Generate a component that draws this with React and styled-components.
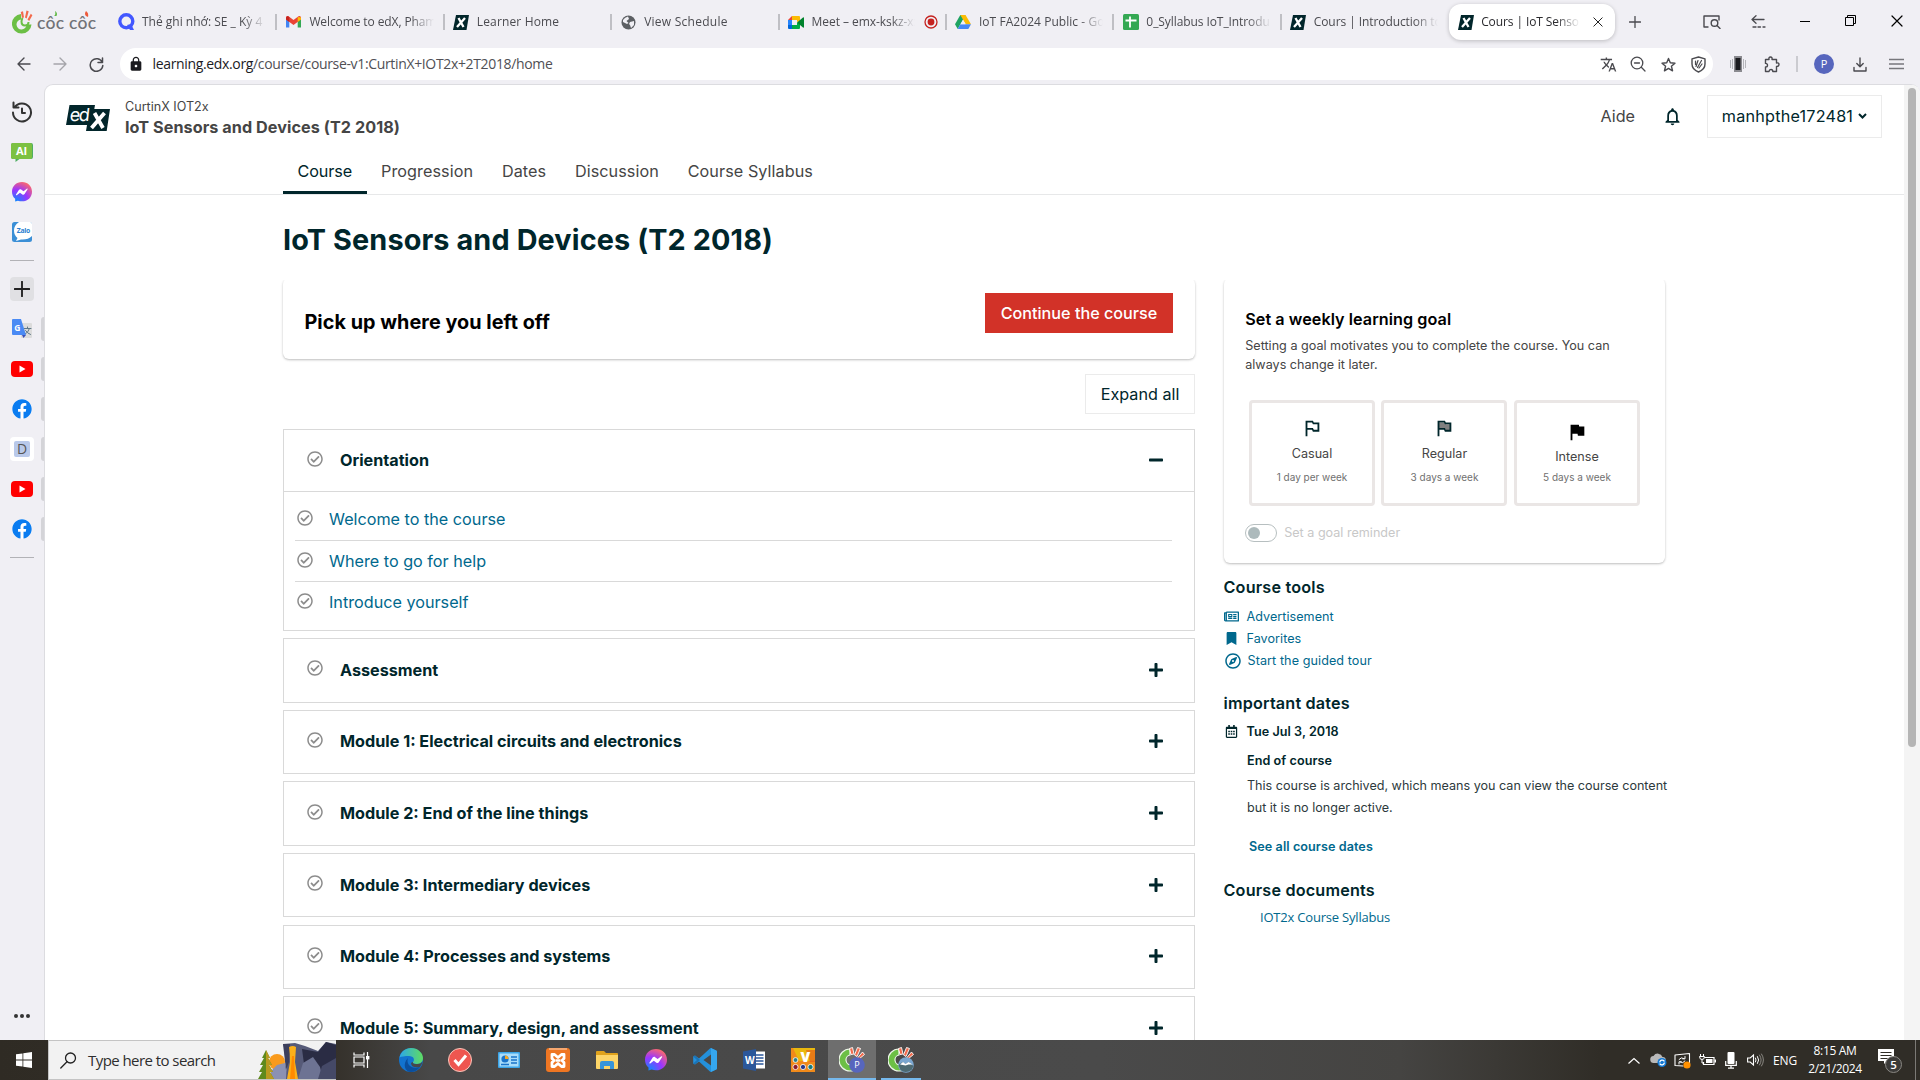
import React from "react";
import styled, { createGlobalStyle, css } from "styled-components";
import {
  FaRegCheckCircle,
  FaPlus,
  FaMinus,
  FaRegNewspaper,
  FaBookmark,
  FaRegCompass,
  FaRegCalendarAlt,
  FaFacebook,
} from "react-icons/fa";
import {
  MdOutlinedFlag,
  MdFlag,
  MdTranslate,
  MdLock,
  MdNotificationsNone,
} from "react-icons/md";

const inter = `Inter, "Liberation Sans", sans-serif`;
const segoe = `"Open Sans", "Noto Sans", sans-serif`;

const GlobalStyle = createGlobalStyle`
  *, *::before, *::after { box-sizing: border-box; }
  body { margin: 0; overflow: hidden; font-family: ${inter}; }
  svg { display: block; flex: none; }
`;

/* ---------- window ---------- */

const Screen = styled.div`
  display: flex;
  flex-direction: column;
  width: 1920px;
  height: 1080px;
  overflow: hidden;
  background: #f0eff4;
`;

const TabStrip = styled.div`
  display: flex;
  align-items: center;
  height: 44px;
  padding-left: 12px;
  font-family: ${segoe};
`;

const Brand = styled.div`
  display: flex;
  align-items: center;
  width: 98px;
  gap: 4px;
`;

const Tab = styled.div`
  display: flex;
  align-items: center;
  flex: none;
  width: 167.4px;
  height: 36px;
  padding: 0 9px 0 8px;
  gap: 7px;
  font-size: 12px;
  color: #4b4b50;
  ${(p) =>
    p.$divider &&
    css`
      background: linear-gradient(#bfbfc4, #bfbfc4) right center / 2px 16px no-repeat;
    `}
  ${(p) =>
    p.$active &&
    css`
      width: 166px;
      background: #fff;
      border-radius: 12px;
      color: #2a2a2e;
      box-shadow: 0 1px 4px rgba(0, 0, 0, 0.22);
    `}
`;

const TabTitle = styled.span`
  flex: 1;
  min-width: 0;
  overflow: hidden;
  white-space: nowrap;
  line-height: 20px;
  letter-spacing: ${(p) => p.$track}px;
  mask-image: linear-gradient(90deg, #000 calc(100% - 26px), transparent calc(100% - 2px));
`;

const TabIcon = styled.span`
  display: flex;
  justify-content: center;
  width: 17px;
  flex: none;
`;

const NewTab = styled.div`
  display: flex;
  justify-content: center;
  width: 39px;
`;

const WindowButtons = styled.div`
  display: flex;
  margin-left: auto;
`;

const WindowButton = styled.div`
  display: flex;
  justify-content: center;
  width: 46.2px;
`;

const Toolbar = styled.div`
  display: flex;
  align-items: center;
  height: 40px;
  padding: 0 6px;
`;

const ToolButton = styled.div`
  display: flex;
  justify-content: center;
  width: ${(p) => p.$w || 36}px;
`;

const AddressBar = styled.div`
  display: flex;
  align-items: center;
  width: 1593px;
  height: 32px;
  margin: 0 6px 0 6px;
  padding: 0 0 0 8px;
  border-radius: 16px;
  background: #fff;
  font: 14px/20px ${segoe};
  color: #505055;
`;

const Url = styled.span`
  margin-left: 8.5px;
  margin-right: auto;
  letter-spacing: -0.345px;
  white-space: nowrap;
  b {
    font-weight: 400;
    color: #1b1b1f;
  }
`;

const VLine = styled.span`
  width: 2px;
  height: 16px;
  margin: 0 16px 0 9px;
  background: #cbcbd0;
`;

const Avatar = styled.div`
  width: 20px;
  height: 20px;
  border-radius: 50%;
  background: #5766bd;
  color: #fff;
  font: 11px/20px ${segoe};
  text-align: center;
`;

const Body = styled.div`
  display: flex;
  flex: 1;
  min-height: 0;
`;

/* ---------- side rail ---------- */

const Rail = styled.div`
  display: flex;
  flex-direction: column;
  align-items: center;
  width: 44px;
  padding-top: 8px;
`;

const RailItem = styled.div`
  position: relative;
  display: flex;
  align-items: center;
  justify-content: center;
  width: 44px;
  height: 40px;
  ${(p) =>
    p.$open &&
    css`
      &::after {
        content: "";
        position: absolute;
        right: 0;
        top: 8px;
        width: 3px;
        height: 24px;
        border-radius: 3px 0 0 3px;
        background: #d4d4d8;
      }
    `}
`;

const RailLine = styled.div`
  width: 24px;
  height: 1px;
  margin: 8px 0;
  background: #b2b2b6;
`;

const RailTile = styled.div`
  display: flex;
  align-items: center;
  justify-content: center;
  width: 24px;
  height: 24px;
  border-radius: 4px;
  background: ${(p) => p.$bg};
`;

const LetterTile = styled.div`
  width: 16px;
  height: 16px;
  border-radius: 2px;
  background: #b9c9ea;
  color: #555;
  font: 14px/16px ${segoe};
  text-align: center;
`;

const RailMore = styled.div`
  display: flex;
  gap: 2px;
  margin-top: auto;
  margin-bottom: 22px;
  i {
    width: 4px;
    height: 4px;
    border-radius: 50%;
    background: #333;
  }
`;

const RailCircle = styled.div`
  border-radius: 50%;
  background: #fff;
`;

/* ---------- page ---------- */

const Viewport = styled.div`
  display: flex;
  flex: 1;
  min-width: 0;
  border: solid #dcdce0;
  border-width: 1px 0 0 1px;
  border-radius: 9px 9px 0 0;
  background: #fff;
  overflow: hidden;
`;

const Page = styled.div`
  flex: 1;
  height: 955px;
  overflow: hidden;
  color: #454545;
`;

const ScrollTrack = styled.div`
  width: 16px;
  padding: 3px 4px;
  background: #f4f4f4;
`;

const ScrollThumb = styled.div`
  width: 8px;
  height: 659px;
  border-radius: 4px;
  background: #b5b5b5;
`;

const Header = styled.header`
  height: 110px;
  border-bottom: 1px solid #e7e8e9;
`;

const HeaderTop = styled.div`
  display: flex;
  height: 67px;
  padding: 0 22px 0 21px;
`;

const Logo = styled.svg`
  margin: 20px 15px 0 0;
`;

const CourseName = styled.div`
  padding-top: 13px;
  font-size: 12.6px;
  line-height: 17px;
  white-space: nowrap;
  strong {
    display: block;
    margin-top: 2px;
    font-size: 16.2px;
    font-weight: 700;
    line-height: 20px;
    letter-spacing: 0.06px;
  }
`;

const HeaderRight = styled.div`
  display: flex;
  align-items: center;
  height: 43px;
  margin: 10px 0 0 auto;
  font-size: 16.2px;
`;

const Help = styled.span`
  margin: -2px 27px 0 0;
`;

const UserButton = styled.div`
  display: flex;
  align-items: center;
  justify-content: center;
  gap: 5px;
  width: 175px;
  height: 43px;
  padding-bottom: 1px;
  margin-left: 24px;
  border: 1px solid #ebebeb;
  color: #00262b;
  letter-spacing: 0.2px;
`;

const CourseTabs = styled.nav`
  display: flex;
  height: 42px;
  margin-left: 238px;
`;

const CourseTab = styled.a`
  height: 42px;
  padding: 6.5px 14.4px 0;
  font-size: 16.2px;
  line-height: 24px;
  letter-spacing: ${(p) => (p.$active ? -0.06 : 0.07)}px;
  color: ${(p) => (p.$active ? "#00262b" : "#454545")};
  border-bottom: 3px solid ${(p) => (p.$active ? "#00262b" : "transparent")};
`;

const Main = styled.main`
  padding: 29px 0 0 238px;
`;

const CourseTitle = styled.h1`
  margin: 0 0 22px;
  font-size: 28.8px;
  font-weight: 700;
  line-height: 32px;
  letter-spacing: 0.13px;
  color: #00262b;
`;

const Columns = styled.div`
  display: flex;
  align-items: flex-start;
  gap: 28.5px;
`;

const MainColumn = styled.div`
  width: 912px;
`;

const cardShadow = css`
  border-radius: 6px;
  box-shadow: 0 1px 2px rgba(0, 0, 0, 0.15), 0 1px 3px rgba(0, 0, 0, 0.12);
  clip-path: inset(2px -6px -6px -6px);
`;

const ResumeCard = styled.section`
  display: flex;
  justify-content: space-between;
  height: 81px;
  padding: 15px 22px 0 21.5px;
  ${cardShadow}
  h2 {
    margin: 14px 0 0;
    font-size: 19.8px;
    font-weight: 700;
    line-height: 30px;
    letter-spacing: 0.04px;
    color: #000;
  }
`;

const Button = styled.button`
  height: 40px;
  padding: 0;
  width: ${(p) => p.$w}px;
  border: ${(p) => (p.$brand ? "none" : "1px solid #ebebeb")};
  background: ${(p) => (p.$brand ? "#d23228" : "#fff")};
  color: ${(p) => (p.$brand ? "#fff" : "#00262b")};
  font: ${(p) => (p.$brand ? 500 : 400)} 16.2px/24px ${inter};
`;

const ExpandRow = styled.div`
  display: flex;
  justify-content: flex-end;
  margin: 15px 0;
`;

const Section = styled.section`
  margin-bottom: 7.2px;
  border: 1px solid #d9d9d9;
`;

const SectionHead = styled.div`
  display: flex;
  align-items: center;
  height: ${(p) => (p.$open ? 62 : 62.4)}px;
  padding: 0 30px ${(p) => (p.$open ? 1.5 : 1)}px 23px;
  color: #00262b;
  border-bottom: ${(p) => (p.$open ? "1px solid #d9d9d9" : "none")};
  > :first-child {
    margin-top: ${(p) => (p.$open ? -1.5 : -3)}px;
    color: #8c8c8c;
  }
  h3 {
    margin: 0 auto 0 17px;
    font-size: 16.2px;
    font-weight: 700;
    line-height: 24px;
  }
`;

const Lessons = styled.div`
  padding: 7px 22px 8px 11px;
`;

const Lesson = styled.div`
  display: flex;
  align-items: center;
  height: 41px;
  padding: 0 0 1px 2px;
  gap: 16px;
  font-size: 16.2px;
  color: #00688d;
  & + & {
    border-top: 1px solid #d9d9d9;
  }
  > :first-child {
    margin-top: -2px;
    color: #8c8c8c;
  }
`;

/* ---------- right column ---------- */

const SideColumn = styled.aside`
  width: 446px;
  font-size: 12.6px;
`;

const GoalCard = styled.section`
  width: 441px;
  height: 285px;
  padding: 25.5px 21px 0 21.7px;
  ${cardShadow}
  h2 {
    margin: 0 0 2px;
    font-size: 16.2px;
    font-weight: 600;
    line-height: 30px;
    letter-spacing: 0.05px;
    color: #000;
  }
  p {
    margin: 0;
    line-height: 19px;
    letter-spacing: 0.01px;
  }
`;

const Goals = styled.div`
  display: flex;
  gap: 6.5px;
  margin: 26px 0 18px 3.8px;
`;

const Goal = styled.div`
  display: flex;
  flex-direction: column;
  align-items: center;
  width: 126px;
  height: 106px;
  padding-top: ${(p) => (p.$strong ? 18 : 14)}px;
  border: 3px solid #eae6e5;
  border-radius: 4px;
  line-height: 20px;
  svg {
    margin-bottom: ${(p) => (p.$strong ? 4 : 5)}px;
    color: ${(p) => (p.$strong ? "#000" : "#00262b")};
  }
  small {
    margin-top: ${(p) => (p.$strong ? 1.5 : 4.5)}px;
    font-size: 10px;
    line-height: 18px;
    color: #707070;
  }
`;

const Reminder = styled.div`
  display: flex;
  align-items: center;
  gap: 7px;
  color: #c8c8c8;
`;

const Toggle = styled.span`
  width: 32px;
  height: 18px;
  padding: 2px;
  border: 1px solid #b7bfc0;
  border-radius: 9px;
  &::before {
    content: "";
    display: block;
    width: 12px;
    height: 12px;
    border-radius: 50%;
    background: #adbabc;
  }
`;

const SideHeading = styled.h2`
  margin: ${(p) => p.$top}px 0 ${(p) => p.$bottom}px;
  font-size: 16.2px;
  font-weight: 600;
  line-height: 24px;
  letter-spacing: 0.18px;
  color: #00262b;
`;

const ToolLink = styled.a`
  display: flex;
  align-items: center;
  height: 22px;
  gap: ${(p) => (p.$wide ? 6.5 : 7.5)}px;
  padding-left: 0.5px;
  letter-spacing: ${(p) => (p.$wide ? 0.08 : 0.04)}px;
  color: #00688d;
`;

const IconSlot = styled.span`
  display: flex;
  justify-content: center;
  width: ${(p) => p.$w || 15}px;
`;

const DateRow = styled.div`
  display: flex;
  align-items: center;
  gap: 7.5px;
  height: 22px;
  padding-left: 0.5px;
  font-weight: 600;
  letter-spacing: 0.05px;
  color: #00262b;
`;

const DateBody = styled.div`
  padding-left: 23.5px;
  line-height: 22px;
  letter-spacing: -0.01px;
  color: #2d3a3d;
  white-space: nowrap;
  strong {
    display: block;
    margin: 7px 0 3px;
    font-weight: 600;
    letter-spacing: 0.06px;
    color: #00262b;
  }
  a {
    display: block;
    margin: 17px 0 0 2px;
    font-weight: 600;
    letter-spacing: 0.08px;
    color: #00688d;
  }
`;

const DocLink = styled.a`
  display: block;
  padding-left: 36.5px;
  font: 13px/22px ${segoe};
  letter-spacing: -0.2px;
  color: #00688d;
`;

/* ---------- taskbar ---------- */

const Taskbar = styled.footer`
  display: flex;
  height: 40px;
  flex: none;
  background: linear-gradient(90deg, #2f2b24 0, #35312b 336px, #484848 430px, #4a4a4a 1100px, #454442 1400px, #302d27 1600px, #302d27 100%);
  color: #fff;
  font-family: ${segoe};
`;

const TaskCell = styled.div`
  display: flex;
  align-items: center;
  justify-content: center;
  width: ${(p) => p.$w || 49.1}px;
  height: 40px;
  background: ${(p) => (p.$active ? "#6e6e6e" : "none")};
  ${(p) =>
    p.$running &&
    css`
      background-image: linear-gradient(#76b9ed, #76b9ed);
      background-size: ${p.$active ? 48 : 40}px 2px;
      background-position: center bottom;
      background-repeat: no-repeat;
    `}
`;

const SearchBox = styled.div`
  display: flex;
  align-items: center;
  width: 288px;
  height: 40px;
  padding-left: 11px;
  border: 1px solid #c4c4c4;
  border-right: none;
  background: #f2f2f2;
  color: #2e2e2e;
  font-size: 15px;
  overflow: hidden;
  span {
    margin: 0 auto 0 11px;
    letter-spacing: -0.56px;
    white-space: nowrap;
  }
`;

const Tray = styled.div`
  display: flex;
  align-items: center;
  margin-left: auto;
  font-size: 12px;
`;

const TrayCell = styled.div`
  display: flex;
  justify-content: center;
  width: ${(p) => p.$w || 24.2}px;
  letter-spacing: -0.2px;
`;

const Clock = styled.div`
  width: 65px;
  margin-right: 5px;
  line-height: 18px;
  letter-spacing: -0.35px;
  text-align: center;
  white-space: nowrap;
`;

const ShowDesktop = styled.div`
  width: 5px;
  height: 40px;
  margin-left: 6.5px;
  border-left: 1px solid #7c7a76;
`;

/* ---------- drawings ---------- */

const stroke = (w = 1.5, c = "#4a4a4f") => ({
  fill: "none",
  stroke: c,
  strokeWidth: w,
  strokeLinecap: "round",
  strokeLinejoin: "round",
});

const CocMark = () => (
  <svg width="21" height="24" viewBox="0 0 21 24">
    <path d="M9 4A9.800 9.800 0 1 0 19.500 14.500h-5a5 5 0 1 1-5.500-5z" fill="#6cbf45" />
    <path d="M10.500 8a9 9 0 0 0-1 3.500q0 4 3.500 4t3.500-3.500" fill="none" stroke="#6cbf45" strokeWidth="2" />
    <path d="M10 8 8.800 2l2.200-.8L12 7.500zM13 7.500l1.500-7 2.200.8L14.700 8.500zM15.500 9.500 18.800 3.800l1.600 1.400L17.200 11z" fill="#f26a4b" />
  </svg>
);

const CocWord = () => (
  <svg width="60" height="26" viewBox="0 0 60 26">
    <text x="0" y="20" fontFamily="Lato, sans-serif" fontSize="17.500" fontWeight="500" fill="#707277" textLength="59">
      côc côc
    </text>
    <path d="M17 7q2-1 1-5 3 2 1.500 5z" fill="#5fb944" />
    <path d="M49 7q-2-2 0-5 3 2 2 6z" fill="#ee5a3a" />
  </svg>
);

const QIcon = () => (
  <svg width="17" height="18" viewBox="0 0 17 18">
    <circle cx="8.300" cy="8.300" r="6.500" fill="none" stroke="#4257ff" strokeWidth="3.400" />
    <path d="m9 12 3 5h4l-3-6z" fill="#4257ff" />
  </svg>
);

const Gmail = () => (
  <svg width="15" height="12" viewBox="0 0 15 12">
    <path d="M0 2v9.500h3.300V5z" fill="#4285f4" />
    <path d="M15 2v9.500h-3.300V5z" fill="#34a853" />
    <path d="M0 2q0-2.500 2.500-1.700L7.500 4l5-3.700Q15-.5 15 2v1.500L7.500 9 0 3.500z" fill="#ea4335" />
    <path d="M11.700 1 15 1.500v2L11.700 6z" fill="#fbbc04" />
    <path d="M0 2q0-2 2-1.700L3.300 1v5L0 3.600z" fill="#c5221f" />
  </svg>
);

const XIcon = () => (
  <svg width="16" height="15" viewBox="0 0 16 15">
    <path d="M3 0h13l-2.500 15H0z" fill="#02262b" />
    <path d="m5.500 3 5 9M12 3l-8 9" stroke="#fff" strokeWidth="2.300" />
  </svg>
);

const Globe = () => (
  <svg width="15" height="15" viewBox="0 0 15 15">
    <circle cx="7.500" cy="7.500" r="7" fill="#5c5f63" />
    <path d="M2 5q2-3 5-3.500L8 4 5.500 6l2 2L6 9 2 7zM9 7l4-1v4l-3 3-1-3-1-1z" fill="#f0eff4" />
  </svg>
);

const Meet = () => (
  <svg width="17" height="13" viewBox="0 0 17 13">
    <path d="M0 4 4 0v4z" fill="#ea4335" />
    <path d="M4 0h7q1 0 1 1v4L9 6V4H4z" fill="#fbbc04" />
    <path d="M0 4h4v5H0z" fill="#2684fc" />
    <path d="M0 9h4v4H1q-1 0-1-1z" fill="#0066da" />
    <path d="M4 9h5V7l3-1v6q0 1-1 1H4z" fill="#00ac47" />
    <path d="M9 6.500 15 1.500q1-.5 1 .5v9q0 1-1 .5z" fill="#00832d" />
  </svg>
);

const RecordDot = () => (
  <svg width="14" height="14" viewBox="0 0 14 14">
    <circle cx="7" cy="7" r="6" fill="none" stroke="#c5221f" strokeWidth="1.300" />
    <circle cx="7" cy="7" r="3.400" fill="#c5221f" />
  </svg>
);

const Drive = () => (
  <svg width="16" height="14" viewBox="0 0 16 14">
    <path d="M5.300 0h5.200L8 4.500 2.700 14 0 9.300z" fill="#1ea362" />
    <path d="M5.300 0h5.200L16 9.300h-5.200z" fill="#fbbc04" />
    <path d="M5.400 9.300H16L13.300 14H2.700z" fill="#4688f4" />
    <path d="m8 5 2.500 4.300h-5z" fill="#f0eff4" />
  </svg>
);

const Sheets = () => (
  <svg width="16" height="16" viewBox="0 0 16 16">
    <rect width="16" height="16" rx="1.500" fill="#34a853" />
    <path d="M2.500 6.500h11M7 2.500v11" stroke="#fff" strokeWidth="1.800" />
  </svg>
);

const Cross = ({ size = 11, w = 1.2, c = "#222" }) => (
  <svg width={size} height={size} viewBox="0 0 12 12">
    <path d="m1 1 10 10M11 1 1 11" {...stroke(w, c)} />
  </svg>
);

const PlusThin = ({ size, c, w }) => (
  <svg width={size} height={size} viewBox="0 0 12 12">
    <path d="M6 .5v11M.5 6h11" {...stroke(w, c)} />
  </svg>
);

const Arrow = ({ flip, c }) => (
  <svg width="14" height="14" viewBox="0 0 14 14" transform={flip ? "scale(-1 1)" : undefined}>
    <path d="M13 7H1m6-6L1 7l6 6" {...stroke(1.4, c)} />
  </svg>
);

const Messenger = ({ size, id }) => (
  <svg width={size} height={size} viewBox="0 0 24 24">
    <defs>
      <radialGradient id={id} cx="0.2" cy="1" r="1.1">
        <stop offset="0" stopColor="#0a8bff" />
        <stop offset="0.55" stopColor="#9a35ff" />
        <stop offset="1" stopColor="#ff6a68" />
      </radialGradient>
    </defs>
    <path
      d="M12 0C5.200 0 0 5 0 11.600c0 3.500 1.400 6.500 3.800 8.600v3.300l3.300-1.100c1.500.5 3.200.8 4.900.8 6.800 0 12-5 12-11.600S18.800 0 12 0z"
      fill={`url(#${id})`}
    />
    <path d="m4.800 15 3.600-5.600c.6-.9 1.800-1.100 2.600-.5l2.800 2.100 4-3c.5-.4 1.200.2.900.8l-3.600 5.600c-.6.900-1.800 1.100-2.600.5L9.600 12.800l-3.900 3c-.5.300-1.200-.300-.9-.8z" fill="#fff" />
  </svg>
);

const YouTube = () => (
  <svg width="22" height="16" viewBox="0 0 22 16">
    <rect width="22" height="16" rx="4" fill="#f00" />
    <path d="m8.500 4.500 6 3.500-6 3.500z" fill="#fff" />
  </svg>
);

const FacebookIcon = () => (
  <RailCircle>
    <FaFacebook size={20} color="#0a7cf0" />
  </RailCircle>
);

const HistoryIcon = () => (
  <svg width="22" height="22" viewBox="0 0 22 22">
    <path d="M3.500 6.500A9 9 0 1 1 2 11.500M2.500 1.500v5h5M11 7.500V12h3" {...stroke(2, "#333")} />
  </svg>
);

const AiIcon = () => (
  <svg width="22" height="19" viewBox="0 0 22 19">
    <path d="M2 0h18q2 0 2 2v12q0 2-2 2H8.500L4.500 19v-3H2q-2 0-2-2V2q0-2 2-2z" fill="#4fae62" />
    <path d="M2 0h17q2 0 2 2v12q0 2-2 2H2q-2 0-2-2V2q0-2 2-2z" fill="#7cc142" />
    <text x="5" y="12" fontFamily="Open Sans, sans-serif" fontSize="11" fontWeight="700" fill="#fff">
      AI
    </text>
  </svg>
);

const Zalo = () => (
  <svg width="20" height="20" viewBox="0 0 20 20">
    <rect width="20" height="20" rx="2.500" fill="#3b8fd6" />
    <path d="M7 0h11q2 0 2 2v12q-4 4-11 3.500L4 19l1.500-3Q2 13 2 8.500 2 3 7 0z" fill="#fff" />
    <text x="4.800" y="11" fontFamily="Open Sans, sans-serif" fontSize="6.800" fontWeight="700" fill="#2b7fd0" textLength="13.500">
      Zalo
    </text>
  </svg>
);

const GTranslate = () => (
  <svg width="20" height="20" viewBox="0 0 20 20">
    <rect x="9" y="4" width="11" height="15" rx="1" fill="#dcdcdc" />
    <path d="M12 9.500h7M15.500 8v1.500M17.500 9.500q-1 4-5 6M13.500 11.500q2 3 5 4" {...stroke(1, "#607988")} />
    <path d="M1 0h8l5 16H1q-1 0-1-1V1q0-1 1-1z" fill="#4a8af4" />
    <path d="m10 16 4 0-2.500 3z" fill="#3a4fb5" />
    <text x="2.200" y="11.500" fontFamily="Open Sans, sans-serif" fontSize="8.500" fontWeight="700" fill="#fff">
      G
    </text>
  </svg>
);

const EdxLogo = () => (
  <Logo width="44" height="26" viewBox="0 0 44 26">
    <path d="M3.500 0H29l-.7 4H44l-3.300 22H20l1-6H0z" fill="#02262b" />
    <text x="5" y="16.300" fontFamily="Inter, sans-serif" fontSize="18" fill="#fff" textLength="20" transform="skewX(-6)">
      ed
    </text>
    <path d="m28.500 8 8.500 15M38.500 8 25.500 23" stroke="#fff" strokeWidth="3.800" />
  </Logo>
);

const StatusCheck = () => <FaRegCheckCircle size={16} />;

/* ---------- taskbar drawings ---------- */

const WindowsLogo = () => (
  <svg width="16" height="16" viewBox="0 0 16 16">
    <path d="M0 2.300 6.500 1.400v6.200H0zM7.300 1.300 16 0v7.600H7.300zM0 8.400h6.500v6.200L0 13.700zM7.300 8.400H16V16l-8.700-1.300z" fill="#fff" />
  </svg>
);

const Landscape = () => (
  <svg width="78" height="38" viewBox="0 0 78 38">
    <circle cx="19" cy="21" r="8" fill="#f99a1c" />
    <path d="m13 30 6-6 8-2 4 16H13z" fill="#8b91b2" />
    <path d="m25 3 12-1 10 3 13 5 8-9 10 2v35H28l1-20z" fill="#565a78" />
    <path d="m25 3 7 0-1 18-3 8z" fill="#3c3f5c" />
    <path d="m44 8 16 3 8-10 10 3v34H48z" fill="#2a2c44" />
    <path d="m40 38 5-16 10-6 7 10 3 12z" fill="#6d7393" />
    <path d="m60 38 4-13 14-8v21z" fill="#454967" />
    <path d="M31 6q4-2 7 0l-1 15 3 17H29l3-17q0-9-1-15z" fill="#fbb019" />
    <path d="m34 15 2 0 1 23h-5z" fill="#ff8a00" />
    <path d="m8 9 4 8h-2l4 7h-3l4 7h-3l4 7H0l4-7H1l4-7H2l4-7H4z" fill="#5f8a1c" />
    <path d="m8 9 4 8h-2l4 7h-3l4 7h-3l4 7H8z" fill="#b99a1f" />
  </svg>
);

const TaskView = () => (
  <svg width="17" height="16" viewBox="0 0 17 16">
    <path d="M1 .500V3h10V.500M1 15.500V13h10v2.500M1 5h10v6H1zM14.500 0v16" fill="none" stroke="#fff" strokeWidth="1.200" />
    <rect x="13" y="4" width="3.400" height="3.400" fill="#fff" />
  </svg>
);

const Edge = () => (
  <svg width="24" height="24" viewBox="0 0 24 24">
    <defs>
      <linearGradient id="edgeTop" x1="0" x2="1">
        <stop offset="0" stopColor="#2ca8e8" />
        <stop offset="1" stopColor="#5fdc61" />
      </linearGradient>
    </defs>
    <circle cx="12" cy="12" r="12" fill="#1273cf" />
    <path d="M.5 9.500C2 3.500 6.500 0 12 0c7 0 12 5 12 10 0 4-3 6-6 6-3 0-4.500-1-4-2 2-2 1-6-4-6C6 8 2 8.500.5 9.500z" fill="url(#edgeTop)" />
    <path d="M9 10c-2 5 2 12 12 9-3 4-6 5-9 5-6 0-9-8-3-14z" fill="#0b4f9d" />
    <path d="M14 14q-1 2 4 2 4 0 5.500-2.500-.5 3-2.500 5.500-8 1.500-9-3.500 0-1.500 2-1.500z" fill="#46474a" />
  </svg>
);

const RedCheck = () => (
  <svg width="24" height="24" viewBox="0 0 24 24">
    <circle cx="12" cy="12" r="11.500" fill="#ee5650" stroke="#f7c8bd" strokeWidth="1" />
    <path d="m6.500 12 4 4.500 7.500-9" fill="none" stroke="#fff" strokeWidth="3" />
  </svg>
);

const ChartCard = () => (
  <svg width="22" height="16" viewBox="0 0 22 16">
    <rect width="22" height="16" rx="1" fill="#3ba5e8" />
    <rect x="1.500" y="1.500" width="19" height="13" fill="#a9dcfa" />
    <circle cx="7" cy="7" r="3.600" fill="#1a73c9" />
    <path d="M7 7V3.400A3.600 3.600 0 0 1 10.600 7z" fill="#f5a623" />
    <path d="M13 5h6M13 8h6M13 11h6M3 12.500h8" stroke="#1a73c9" strokeWidth="1.300" />
  </svg>
);

const Xampp = () => (
  <svg width="24" height="24" viewBox="0 0 24 24">
    <rect width="24" height="24" rx="3" fill="#ef7622" />
    <path d="M3 1h18" stroke="#f9b98a" strokeWidth="1.500" />
    <path
      d="M6 6.500h2.500l3.500 3 3.500-3H18v4L16 12.500l2 2v4h-2.500L12 15.500l-3.500 3H6v-4l2-2-2-2z"
      fill="none"
      stroke="#fff"
      strokeWidth="2.800"
      strokeLinejoin="round"
    />
    <path d="M9.500 12.500h5" stroke="#fff" strokeWidth="2.500" />
  </svg>
);

const Folder = () => (
  <svg width="22" height="18" viewBox="0 0 22 18">
    <path d="M0 1q0-1 1-1h7l2 2h11q1 0 1 1v14H0z" fill="#e0a21c" />
    <path d="M0 4h22v13q0 1-1 1H1q-1 0-1-1z" fill="#fdd568" />
    <path d="M4 18v-6q0-2 2-2h10q2 0 2 2v6h-4v-3H8v3z" fill="#3795d9" />
  </svg>
);

const VsCode = () => (
  <svg width="24" height="24" viewBox="0 0 24 24">
    <path d="m17.500 0 5.700 2.500q.8.300.8 1.200v16.600q0 .9-.8 1.200L17.500 24 6 13.500l-4 3-1.800-1V8.500l1.800-1 4 3zM18 6.500 10.500 12l7.500 5.500z" fill="#2491dc" fillRule="evenodd" />
    <path d="m18 0 5.200 2.500q.8.300.8 1.200v16.600q0 .9-.8 1.200L18 24z" fill="#35a7f0" />
    <path d="M.2 8.500 2 7.500l5 4.500-5 4.500-1.800-1L4 12z" fill="#1a74b8" />
  </svg>
);

const Word = () => (
  <svg width="22" height="22" viewBox="0 0 22 22">
    <rect x="11" y="2.500" width="11" height="17" fill="#fff" />
    <path d="M13 6h7.500M13 9h7.500M13 12h7.500M13 15h7.500" stroke="#2b579a" strokeWidth="1.400" />
    <path d="M0 2.500 13 0v22L0 19.500z" fill="#2b579a" />
    <text x="2" y="15" fontFamily="Open Sans, sans-serif" fontSize="10" fontWeight="700" fill="#fff">
      W
    </text>
  </svg>
);

const UniKey = () => (
  <svg width="24" height="24" viewBox="0 0 24 24">
    <rect width="24" height="24" fill="#f08a1a" />
    <path d="M2 0h22v13H8z" fill="#e9b80e" />
    <path d="M15 2h9v12h-5z" fill="#e8521a" opacity=".6" />
    <text x="9.500" y="14" fontFamily="Open Sans, sans-serif" fontSize="14" fontWeight="800" fill="#fff">
      V
    </text>
    <g stroke="#fff" strokeWidth=".8">
      <circle cx="4.500" cy="12" r="2.400" fill="#2d7f86" />
      <circle cx="4.500" cy="19" r="2.600" fill="#8a1a2a" />
      <circle cx="12" cy="19" r="2.600" fill="#283a8a" />
      <circle cx="19.500" cy="19" r="2.600" fill="#147a7a" />
    </g>
  </svg>
);

const CocTask = ({ letter }) => (
  <svg width="26" height="26" viewBox="0 0 26 26">
    <path d="M11 2A11 11 0 1 0 22 13h-5a5 5 0 1 1-6-5z" fill="#6cbf45" stroke="#eef7ea" strokeWidth="1.200" />
    <path d="M12 7.500 10.500 1.500 13.500.5l1.500 6.500zM15.500 8l3-7.500 3 1L18 9.500zM18.500 11l5-6 2 2.500L20 12z" fill="#f26a4b" stroke="#fff" strokeWidth=".9" />
    {letter ? (
      <>
        <circle cx="18" cy="18" r="7.800" fill="#5766bd" />
        <text x="18" y="21.300" textAnchor="middle" fontFamily="Open Sans, sans-serif" fontSize="9" fill="#fff">
          {letter}
        </text>
      </>
    ) : (
      <>
        <circle cx="18" cy="18" r="7.800" fill="#7aa6cf" />
        <path d="m10.500 18 4-3 3 2 3-2 5 4-2 4q-6 4-11 0z" fill="#4d6a72" />
        <path d="m12 17.500 3-2.500 2.500 2 3-2 4 2.500-4 0-3 1z" fill="#fff" />
      </>
    )}
  </svg>
);

const CloudSync = () => (
  <svg width="17" height="14" viewBox="0 0 17 14">
    <path d="M4 10a3.500 3.500 0 0 1-.5-7 5 5 0 0 1 9 1A3 3 0 0 1 13 10z" fill="#b9b9b9" />
    <circle cx="12" cy="9.500" r="4.500" fill="#1379d4" />
    <path d="M9.800 9a2.500 2.500 0 0 1 4.300-1M14.300 10a2.500 2.500 0 0 1-4.300 1" {...stroke(1.2, "#fff")} />
  </svg>
);

const UpdateIcon = () => (
  <svg width="17" height="17" viewBox="0 0 17 17">
    <path d="m1 3 14.500-1.500V13M1 3v10.500l8 .5" {...stroke(1.1, "#fff")} />
    <path d="M5 7.500q2-3 5-1M11 4.500v2.300H8.700M11 9q-2 3-5 1M5 12V9.800h2.300" {...stroke(1, "#fff")} />
    <circle cx="13" cy="13" r="3.600" fill="#ff9000" />
  </svg>
);

const Battery = () => (
  <svg width="17" height="12" viewBox="0 0 17 12">
    <path d="M5.500 3.500h9.500v7H4.500V8" fill="none" stroke="#fff" strokeWidth="1.200" />
    <rect x="7" y="5" width="6.500" height="4" fill="#fff" />
    <rect x="15.500" y="5.500" width="1.500" height="3" fill="#fff" />
    <path d="M1.500 0v2M4.500 0v2M.5 2.500h5q0 3-2.500 3t-2.500-3zM3 5.500V9h2" fill="none" stroke="#fff" strokeWidth="1" />
  </svg>
);

const Mic = () => (
  <svg width="12" height="17" viewBox="0 0 12 17">
    <rect x="2.500" y="0" width="7" height="12" rx="1" fill="#fff" />
    <path d="M.7 9v4.300h10.600V9M6 13.500V16M3 16.200h6" fill="none" stroke="#fff" strokeWidth="1.200" />
  </svg>
);

const Volume = () => (
  <svg width="17" height="14" viewBox="0 0 17 14">
    <path d="M.6 5v4h2.600L6.500 12V2L3.200 5z" fill="none" stroke="#fff" strokeWidth="1.100" />
    <path d="M8.500 5q1.200 2 0 4M10.500 3.500q2.400 3.500 0 7" {...stroke(1, "#fff")} />
    <path d="M12.500 2q3.400 5 0 10M14.500 1q4 6 0 12" {...stroke(1, "#8a8883")} />
  </svg>
);

const Notice = () => (
  <svg width="25" height="25" viewBox="0 0 25 25">
    <path d="M0 1h16v12h-7l-3 3v-3H0z" fill="#fff" />
    <path d="M2.500 4.500h11M2.500 7.500h11M2.500 10.500h7" stroke="#302d27" strokeWidth="1.200" />
    <circle cx="15.500" cy="16.500" r="8" fill="#3b3a38" stroke="#8a8883" strokeWidth="1" />
    <text x="15.500" y="20.500" textAnchor="middle" fontFamily="Open Sans, sans-serif" fontSize="11.500" fontWeight="600" fill="#fff">
      5
    </text>
  </svg>
);

/* ---------- data ---------- */

const tabs = [
  { icon: <QIcon />, title: "Thẻ ghi nhớ: SE _ Kỳ 4", track: 0 },
  { icon: <Gmail />, title: "Welcome to edX, Pham", track: -0.1 },
  { icon: <XIcon />, title: "Learner Home", track: 0.15 },
  { icon: <Globe />, title: "View Schedule", track: 0.25 },
  { icon: <Meet />, title: "Meet – emx-kskz-xx", track: -0.05, after: <RecordDot /> },
  { icon: <Drive />, title: "IoT FA2024 Public - Go", track: 0.05 },
  { icon: <Sheets />, title: "0_Syllabus IoT_Introdu", track: -0.08 },
  { icon: <XIcon />, title: "Cours | Introduction to", track: -0.08 },
];

const lessons = ["Welcome to the course", "Where to go for help", "Introduce yourself"];

const modules = [
  "Assessment",
  "Module 1: Electrical circuits and electronics",
  "Module 2: End of the line things",
  "Module 3: Intermediary devices",
  "Module 4: Processes and systems",
  "Module 5: Summary, design, and assessment",
];

const taskApps = [
  <Edge />,
  <RedCheck />,
  <ChartCard />,
  <Xampp />,
  <Folder />,
  <Messenger size={22} id="msgTask" />,
  <VsCode />,
  <Word />,
  <UniKey />,
];

/* ---------- parts ---------- */

const BrowserTabs = () => (
  <TabStrip>
    <Brand>
      <CocMark />
      <CocWord />
    </Brand>
    {tabs.map((t, i) => (
      <Tab key={i} $divider={i < 7}>
        <TabIcon>{t.icon}</TabIcon>
        <TabTitle $track={t.track}>{t.title}</TabTitle>
        {t.after}
      </Tab>
    ))}
    <Tab $active>
      <TabIcon>
        <XIcon />
      </TabIcon>
      <TabTitle $track={-0.1}>Cours | IoT Sensors</TabTitle>
      <TabIcon>
        <Cross size={10} />
      </TabIcon>
    </Tab>
    <NewTab>
      <PlusThin size={12} c="#4a4a4f" w={1.3} />
    </NewTab>
    <WindowButtons>
      <WindowButton>
        <svg width="18" height="14" viewBox="0 0 18 14">
          <path d="M5 12H1V1h15v4" {...stroke(1.4)} />
          <circle cx="11.500" cy="8" r="3.300" {...stroke(1.4)} />
          <path d="m14 10.500 3 3" {...stroke(1.4)} />
        </svg>
      </WindowButton>
      <WindowButton>
        <svg width="15" height="13" viewBox="0 0 15 13">
          <path d="M13 4.500H1M5 .7 1 4.500l4 3.800" {...stroke(1.3)} />
          <path d="M2 12h3M7 12h2.500M12 12h2" {...stroke(1.3)} />
        </svg>
      </WindowButton>
      <WindowButton>
        <svg width="10" height="12" viewBox="0 0 10 12">
          <path d="M0 6.500h10" stroke="#000" strokeWidth="1" />
        </svg>
      </WindowButton>
      <WindowButton>
        <svg width="11" height="11" viewBox="0 0 11 11">
          <path d="M.5 2.500h8v8h-8zM2.500 2.500v-2h8v8h-2" fill="none" stroke="#000" />
        </svg>
      </WindowButton>
      <WindowButton>
        <Cross size={12} c="#000" />
      </WindowButton>
    </WindowButtons>
  </TabStrip>
);

const BrowserToolbar = () => (
  <Toolbar>
    <ToolButton>
      <Arrow c="#4a4a4f" />
    </ToolButton>
    <ToolButton>
      <Arrow flip c="#a5a5aa" />
    </ToolButton>
    <ToolButton>
      <svg width="15" height="15" viewBox="0 0 15 15">
        <path d="M13.300 5.500A6.300 6.300 0 1 0 13.800 8.500M13.500 1v4.500H9" {...stroke(1.5)} />
      </svg>
    </ToolButton>
    <AddressBar>
      <MdLock size={16} color="#1b1b1f" />
      <Url>
        <b>learning.edx.org</b>/course/course-v1:CurtinX+IOT2x+2T2018/home
      </Url>
      <ToolButton $w={30}>
        <MdTranslate size={17} color="#4a4a4f" />
      </ToolButton>
      <ToolButton $w={30}>
        <svg width="16" height="16" viewBox="0 0 16 16">
          <circle cx="7" cy="7" r="5.800" {...stroke(1.3)} />
          <path d="M4.500 7h5M11.300 11.300 15 15" {...stroke(1.3)} />
        </svg>
      </ToolButton>
      <ToolButton $w={30}>
        <svg width="15" height="15" viewBox="0 0 16 16">
          <path d="m8 1.500 1.900 4.700 5 .4-3.800 3.200 1.200 4.900L8 12.100l-4.300 2.600 1.200-4.900L1.100 6.600l5-.4z" {...stroke(1.5)} />
        </svg>
      </ToolButton>
      <ToolButton $w={30}>
        <svg width="15" height="17" viewBox="0 0 15 17">
          <path d="M7.500 1 14 2.800V8q0 5.500-6.500 8Q1 13.500 1 8V2.800z" {...stroke(1.4)} />
          <path d="M4.500 5v3.500M7 4.500 5 10.500M10.500 4.500l-4 7M11 8l-3 4" {...stroke(1.2)} />
        </svg>
      </ToolButton>
    </AddressBar>
    <ToolButton $w={38}>
      <svg width="16" height="16" viewBox="0 0 16 16">
        <path d="M.5 4v8M2.500 3v10M13.500 3v10M15.500 4v8" stroke="#b5b5ba" />
        <rect x="4" y="0" width="8" height="16" fill="#8a8a8f" />
        <rect x="5.500" y="2" width="5" height="12" fill="#1b1b1f" />
      </svg>
    </ToolButton>
    <ToolButton $w={30}>
      <svg width="16" height="17" viewBox="0 0 16 17">
        <path d="M1.500 3.500H5q-.5-2.500 1.500-2.500T8 3.500h4.500V7q2.500-.5 2.500 1.500t-2.500 2V15.500H8.800q0-2-1.800-2t-2 2H1.500V11q2 0 2-1.800t-2-1.800z" {...stroke(1.4)} />
      </svg>
    </ToolButton>
    <VLine />
    <Avatar>P</Avatar>
    <ToolButton $w={52}>
      <svg width="14" height="15" viewBox="0 0 14 15">
        <path d="M7 1v8.500M3.800 6.500 7 9.700l3.200-3.200M1 10.500V14h12v-3.500" {...stroke(1.4)} />
      </svg>
    </ToolButton>
    <ToolButton $w={20}>
      <svg width="15" height="12" viewBox="0 0 15 12">
        <path d="M0 1.500h15M0 6h15M0 10.500h15" stroke="#77777c" strokeWidth="1.400" />
      </svg>
    </ToolButton>
  </Toolbar>
);

const SideRail = () => (
  <Rail>
    <RailItem>
      <HistoryIcon />
    </RailItem>
    <RailItem>
      <AiIcon />
    </RailItem>
    <RailItem>
      <Messenger size={20} id="msgRail" />
    </RailItem>
    <RailItem>
      <Zalo />
    </RailItem>
    <RailLine />
    <RailItem>
      <RailTile $bg="#e0e0e3">
        <PlusThin size={16} c="#222" w={1.4} />
      </RailTile>
    </RailItem>
    <RailItem $open>
      <GTranslate />
    </RailItem>
    <RailItem $open>
      <YouTube />
    </RailItem>
    <RailItem $open>
      <FacebookIcon />
    </RailItem>
    <RailItem $open>
      <RailTile $bg="#fff">
        <LetterTile>D</LetterTile>
      </RailTile>
    </RailItem>
    <RailItem $open>
      <YouTube />
    </RailItem>
    <RailItem $open>
      <FacebookIcon />
    </RailItem>
    <RailLine />
    <RailMore>
      <i />
      <i />
      <i />
    </RailMore>
  </Rail>
);

const PageHeader = () => (
  <Header>
    <HeaderTop>
      <EdxLogo />
      <CourseName>
        CurtinX IOT2x
        <strong>IoT Sensors and Devices (T2 2018)</strong>
      </CourseName>
      <HeaderRight>
        <Help>Aide</Help>
        <MdNotificationsNone size={21} color="#00262b" />
        <UserButton>
          manhpthe172481
          <svg width="9" height="6" viewBox="0 0 9 6">
            <path d="m1 1 3.500 3.500L8 1" fill="none" stroke="#00262b" strokeWidth="2" />
          </svg>
        </UserButton>
      </HeaderRight>
    </HeaderTop>
    <CourseTabs>
      <CourseTab $active>Course</CourseTab>
      <CourseTab>Progression</CourseTab>
      <CourseTab>Dates</CourseTab>
      <CourseTab>Discussion</CourseTab>
      <CourseTab>Course Syllabus</CourseTab>
    </CourseTabs>
  </Header>
);

const Outline = () => (
  <MainColumn>
    <ResumeCard>
      <h2>Pick up where you left off</h2>
      <Button $brand $w={188}>
        Continue the course
      </Button>
    </ResumeCard>
    <ExpandRow>
      <Button $w={110}>Expand all</Button>
    </ExpandRow>
    <Section>
      <SectionHead $open>
        <StatusCheck />
        <h3>Orientation</h3>
        <FaMinus size={16} />
      </SectionHead>
      <Lessons>
        {lessons.map((l) => (
          <Lesson key={l}>
            <StatusCheck />
            {l}
          </Lesson>
        ))}
      </Lessons>
    </Section>
    {modules.map((m) => (
      <Section key={m}>
        <SectionHead>
          <StatusCheck />
          <h3>{m}</h3>
          <FaPlus size={16} />
        </SectionHead>
      </Section>
    ))}
  </MainColumn>
);

const Sidebar = () => (
  <SideColumn>
    <GoalCard>
      <h2>Set a weekly learning goal</h2>
      <p>
        Setting a goal motivates you to complete the course. You can
        <br />
        always change it later.
      </p>
      <Goals>
        <Goal>
          <MdOutlinedFlag size={22} />
          Casual
          <small>1 day per week</small>
        </Goal>
        <Goal>
          <svg width="22" height="22" viewBox="0 0 24 24">
            <path d="M6 6h7l1 2h4.500v6.500H14l-1-2H6z" fill="#808080" />
            <path d="m14 6-1-2H5v17h2v-7h5l1 2h7V6zm4 8h-4l-1-2H7V6h5l1 2h5z" fill="#00262b" />
          </svg>
          Regular
          <small>3 days a week</small>
        </Goal>
        <Goal $strong>
          <MdFlag size={22} />
          Intense
          <small>5 days a week</small>
        </Goal>
      </Goals>
      <Reminder>
        <Toggle />
        Set a goal reminder
      </Reminder>
    </GoalCard>
    <SideHeading $top={11.5} $bottom={7}>
      Course tools
    </SideHeading>
    <ToolLink>
      <IconSlot>
        <FaRegNewspaper size={15} />
      </IconSlot>
      Advertisement
    </ToolLink>
    <ToolLink>
      <IconSlot>
        <FaBookmark size={13} />
      </IconSlot>
      Favorites
    </ToolLink>
    <ToolLink $wide>
      <IconSlot $w={17}>
        <FaRegCompass size={16} />
      </IconSlot>
      Start the guided tour
    </ToolLink>
    <SideHeading $top={19} $bottom={6}>
      important dates
    </SideHeading>
    <DateRow>
      <IconSlot>
        <FaRegCalendarAlt size={13} />
      </IconSlot>
      Tue Jul 3, 2018
    </DateRow>
    <DateBody>
      <strong>End of course</strong>
      This course is archived, which means you can view the course content
      <br />
      but it is no longer active.
      <a>See all course dates</a>
    </DateBody>
    <SideHeading $top={20.5} $bottom={3.5}>
      Course documents
    </SideHeading>
    <DocLink>IOT2x Course Syllabus</DocLink>
  </SideColumn>
);

const SystemBar = () => (
  <Taskbar>
    <TaskCell $w={48}>
      <WindowsLogo />
    </TaskCell>
    <SearchBox>
      <svg width="17" height="17" viewBox="0 0 17 17">
        <circle cx="10.500" cy="6" r="5" {...stroke(1.3, "#222")} />
        <path d="M7 9.800.8 16" {...stroke(1.3, "#222")} />
      </svg>
      <span>Type here to search</span>
      <Landscape />
    </SearchBox>
    <TaskCell $w={50}>
      <TaskView />
    </TaskCell>
    {taskApps.map((app, i) => (
      <TaskCell key={i}>{app}</TaskCell>
    ))}
    <TaskCell $w={48} $active $running>
      <CocTask letter="P" />
    </TaskCell>
    <TaskCell $w={50} $running>
      <CocTask />
    </TaskCell>
    <Tray>
      <TrayCell>
        <svg width="12" height="7" viewBox="0 0 12 7">
          <path d="m.5 6.500 5.500-5 5.500 5" fill="none" stroke="#fff" strokeWidth="1.200" />
        </svg>
      </TrayCell>
      <TrayCell>
        <CloudSync />
      </TrayCell>
      <TrayCell>
        <UpdateIcon />
      </TrayCell>
      <TrayCell>
        <Battery />
      </TrayCell>
      <TrayCell>
        <Mic />
      </TrayCell>
      <TrayCell>
        <Volume />
      </TrayCell>
      <TrayCell $w={35}>ENG</TrayCell>
      <Clock>
        8:15 AM
        <br />
        2/21/2024
      </Clock>
      <TrayCell $w={36}>
        <Notice />
      </TrayCell>
      <ShowDesktop />
    </Tray>
  </Taskbar>
);

export default function App() {
  return (
    <Screen>
      <GlobalStyle />
      <BrowserTabs />
      <BrowserToolbar />
      <Body>
        <SideRail />
        <Viewport>
          <Page>
            <PageHeader />
            <Main>
              <CourseTitle>IoT Sensors and Devices (T2 2018)</CourseTitle>
              <Columns>
                <Outline />
                <Sidebar />
              </Columns>
            </Main>
          </Page>
          <ScrollTrack>
            <ScrollThumb />
          </ScrollTrack>
        </Viewport>
      </Body>
      <SystemBar />
    </Screen>
  );
}
